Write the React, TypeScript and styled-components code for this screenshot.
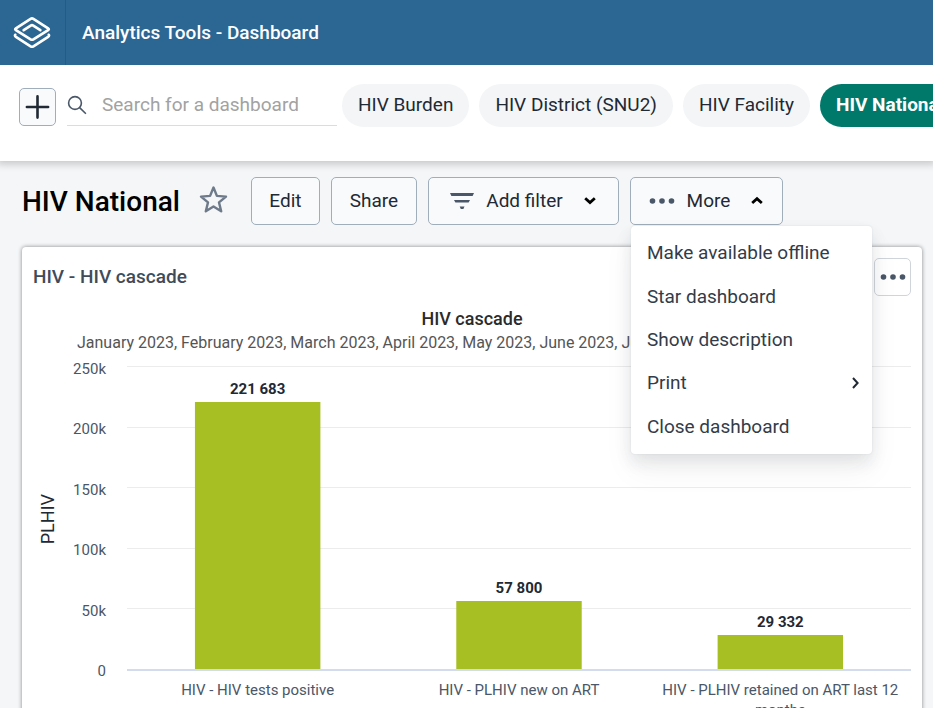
import React from "react";
import styled, { createGlobalStyle } from "styled-components";

const GlobalStyle = createGlobalStyle`
  * { box-sizing: border-box; }
  body { margin: 0; background: #f4f6f8; }
  body, button, input { font-family: Roboto, "Liberation Sans", sans-serif; }
  h1, h2, h3, p, ul { margin: 0; padding: 0; }
`;

const Page = styled.div`
  height: 100vh;
  overflow: hidden;
  background: #f4f6f8;
  color: #212934;
`;

const HeaderBar = styled.header`
  position: relative;
  z-index: 1;
  display: flex;
  height: 65px;
  background: #2c6693;
  color: #fff;
`;

const LogoLink = styled.a`
  display: flex;
  align-items: center;
  justify-content: center;
  width: 66px;
  padding-right: 2px;
  border-right: 1px solid #255a84;
`;

const AppTitle = styled.div`
  padding-left: 16px;
  font-size: 19px;
  font-weight: 500;
  line-height: 65px;
`;

const DashboardsBar = styled.nav`
  position: relative;
  display: flex;
  align-items: flex-start;
  height: 96px;
  padding: 19px 0 0 19px;
  background: #fff;
  box-shadow: 0 0 8px 3px rgba(0, 0, 0, 0.2);
  white-space: nowrap;
`;

const AddButton = styled.button`
  display: flex;
  flex: none;
  align-items: center;
  justify-content: center;
  width: 37px;
  height: 38px;
  margin: 4px 11px 0 0;
  padding: 0;
  border: 1px solid #a0adba;
  border-radius: 5px;
  background: #f9fafb;
`;

const SearchField = styled.label`
  display: flex;
  flex: none;
  align-items: center;
  width: 270px;
  height: 42px;
  margin-right: 5px;
  border-bottom: 1px solid #d5dde5;
`;

const SearchInput = styled.input`
  flex: 1;
  min-width: 0;
  margin-left: 15px;
  padding: 0;
  border: 0;
  outline: 0;
  background: transparent;
  font-size: 19px;
  &::placeholder { color: #a2a2a2; opacity: 1; }
`;

const ChipList = styled.div`
  display: flex;
  flex: 1;
  min-width: 0;
  gap: 10px;
  overflow: hidden;
`;

const Chip = styled.a<{ $selected?: boolean }>`
  flex: none;
  height: 43px;
  padding: 0 16px;
  border-radius: 22px;
  background: ${(p) => (p.$selected ? "#00796b" : "#f3f5f7")};
  color: ${(p) => (p.$selected ? "#fff" : "#212934")};
  font-size: 19px;
  font-weight: ${(p) => (p.$selected ? 700 : 400)};
  line-height: 41px;
  text-decoration: none;
`;

const TitleBar = styled.div`
  display: flex;
  align-items: flex-start;
  padding: 16px 22px 0;
`;

const DashboardTitle = styled.h1`
  color: #000;
  font-size: 28px;
  font-weight: 500;
  line-height: 50px;
`;

const StarButton = styled.button`
  display: flex;
  margin: 8px 23px 0 19px;
  padding: 0;
  border: 0;
  background: transparent;
`;

const ButtonRow = styled.div`
  display: flex;
  gap: 11px;
`;

const Button = styled.button<{ $width: number }>`
  display: flex;
  align-items: center;
  justify-content: center;
  min-width: ${(p) => p.$width}px;
  height: 48px;
  padding: 0 0 2px;
  border: 1px solid #a0adba;
  border-radius: 5px;
  background: #f9fafb;
  color: #212934;
  font-size: 19px;
  svg { margin-top: 2px; }
`;

const ButtonLabel = styled.span`
  margin: 0 20px 0 12px;
`;

const MenuAnchor = styled.div`
  position: relative;
`;

const Menu = styled.ul`
  position: absolute;
  z-index: 2;
  top: 49px;
  left: 1px;
  display: grid;
  grid-auto-rows: 1fr;
  width: 241px;
  height: 228px;
  padding: 5px 0 6px;
  border-radius: 4px;
  background: #fff;
  box-shadow: 0 0 2px rgba(33, 41, 52, 0.1), 0 8px 16px rgba(33, 41, 52, 0.1),
    0 16px 32px rgba(33, 41, 52, 0.05);
  list-style: none;
`;

const MenuItem = styled.li`
  display: flex;
`;

const MenuButton = styled.button`
  display: flex;
  flex: 1;
  align-items: center;
  justify-content: space-between;
  padding: 0 10px 0 16px;
  border: 0;
  background: transparent;
  color: #333c48;
  font-size: 19px;
`;

const Card = styled.section`
  margin: 20px 11px 0 22px;
  padding: 11px 11px 24px;
  border-radius: 4px;
  background: #fff;
  box-shadow: 0 0 4px rgba(0, 0, 0, 0.45);
`;

const CardHeader = styled.div`
  display: flex;
  justify-content: space-between;
  height: 38px;
`;

const CardTitle = styled.h2`
  color: #404b5a;
  font-size: 19px;
  font-weight: 500;
  line-height: 37px;
`;

const CardMenuButton = styled.button`
  display: flex;
  align-items: center;
  justify-content: center;
  width: 37px;
  height: 38px;
  padding: 0;
  border: 1px solid #d0d5db;
  border-radius: 5px;
  background: #fff;
`;

const ChartTitle = styled.h3`
  margin-top: 10px;
  color: #2b2b2b;
  font-size: 18px;
  font-weight: 500;
  line-height: 26px;
  text-align: center;
`;

const ChartSubtitle = styled.p`
  height: 24px;
  margin: 0 42px 0 44px;
  overflow: hidden;
  color: #555;
  font-size: 16px;
  line-height: 22px;
  text-overflow: ellipsis;
  white-space: nowrap;
`;

const ChartBody = styled.div`
  display: grid;
  grid-template-columns: 30px 43px 1fr;
  margin-top: 11px;
`;

const AxisTitle = styled.div`
  align-self: center;
  justify-self: center;
  color: #212934;
  font-size: 18px;
  line-height: 20px;
  writing-mode: vertical-rl;
  transform: rotate(180deg);
`;

const AxisLabels = styled.div`
  display: flex;
  flex-direction: column;
  justify-content: space-between;
  margin: -10px 0;
  padding-top: 2px;
  color: #4a5768;
  font-size: 15px;
  line-height: 20px;
  text-align: right;
`;

const Plot = styled.svg`
  display: block;
  justify-self: end;
  width: calc(100% - 21px);
  height: 304px;
  overflow: visible;
  text {
    fill: #212934;
    font-size: 15px;
    font-weight: 700;
    text-anchor: middle;
  }
`;

const Categories = styled.div`
  display: grid;
  grid-column: 3;
  grid-template-columns: repeat(3, 1fr);
  margin: 9px 0 0 21px;
  color: #4a5768;
  font-size: 15px;
  line-height: 20px;
  text-align: center;
`;

const Category = styled.div`
  padding: 0 10px;
`;

const Logo = () => (
  <svg width="38" height="34" viewBox="0 0 38 34" fill="none" stroke="#fff" strokeWidth="2.7" strokeLinejoin="round" strokeLinecap="round" aria-hidden="true">
    <path d="M17.6 2.9 2.9 12.3q-1.4.9 0 1.8l14.7 9.2q1.4.9 2.8 0l14.7-9.2q1.4-.9 0-1.8L20.4 2.9q-1.4-.9-2.8 0Z" />
    <path d="M2.2 18.8q-.6 1.2.7 2.1l14.7 9.4q1.4.9 2.8 0l14.7-9.4q1.3-.9.7-2.1" />
    <path d="m10.7 14.2 7-4.6q1.3-.8 2.6 0l7 4.6" />
  </svg>
);

const PlusIcon = () => (
  <svg width="25" height="26" viewBox="0 0 25 26" fill="none" stroke="#212934" strokeWidth="2.6" strokeLinecap="round" aria-hidden="true">
    <path d="M12.5 2.4v21.2M1.9 13h21.2" />
  </svg>
);

const SearchIcon = () => (
  <svg width="20" height="20" viewBox="0 0 20 20" fill="none" stroke="#4a5768" strokeWidth="1.6" aria-hidden="true">
    <circle cx="8" cy="8" r="6.4" />
    <path d="m12.6 12.6 6.3 6.2" />
  </svg>
);

const StarIcon = () => (
  <svg width="29" height="29" viewBox="0 0 29 29" fill="none" stroke="#6e7a8a" strokeWidth="2.4" strokeLinejoin="round" aria-hidden="true">
    <path d="m14.5 2.5 3.4 8.4 9.1.7-7 5.8 2.2 8.9-7.7-4.9-7.7 4.9L9 17.4l-7-5.8 9.1-.7Z" />
  </svg>
);

const FilterIcon = () => (
  <svg width="24" height="18" viewBox="0 0 24 18" fill="#4a5768" aria-hidden="true">
    <path d="M0 1h24l-1.4 3H1.4ZM4 8h16l-1.4 2.6H5.4ZM9.7 14.6h4.8L13.4 17h-2.6Z" />
  </svg>
);

const DotsIcon = () => (
  <svg width="26" height="8" viewBox="0 0 26 8" fill="#4a5768" aria-hidden="true">
    <circle cx="3.5" cy="4" r="2.8" />
    <circle cx="13" cy="4" r="2.8" />
    <circle cx="22.5" cy="4" r="2.8" />
  </svg>
);

const chevrons = {
  down: "M2.2 4.2 7 8.6l4.8-4.4",
  up: "M2.2 9 7 4.6 11.8 9",
  right: "m5 2 4.6 5L5 12",
};

const Chevron = ({ direction }: { direction: keyof typeof chevrons }) => (
  <svg width="14" height="14" viewBox="0 0 14 14" fill="none" stroke={direction === "right" ? "#212934" : "#000"} strokeWidth={direction === "right" ? 2 : 2.8} aria-hidden="true">
    <path d={chevrons[direction]} />
  </svg>
);

const dashboards = ["HIV Burden", "HIV District (SNU2)", "HIV Facility", "HIV National"];
const menuItems = ["Make available offline", "Star dashboard", "Show description", "Print", "Close dashboard"];
const ticks = ["250k", "200k", "150k", "100k", "50k", "0"];
const bars = [
  { name: "HIV - HIV tests positive", value: 221683, label: "221 683" },
  { name: "HIV - PLHIV new on ART", value: 57800, label: "57 800" },
  { name: "HIV - PLHIV retained on ART last 12 months", value: 29332, label: "29 332" },
];
const months = ["January", "February", "March", "April", "May", "June", "July", "August", "September"];
const PLOT_HEIGHT = 303;
const AXIS_MAX = 250000;

const Chart = () => (
  <>
    <ChartTitle>HIV cascade</ChartTitle>
    <ChartSubtitle>{months.map((m) => `${m} 2023`).join(", ")}</ChartSubtitle>
    <ChartBody>
      <AxisTitle>PLHIV</AxisTitle>
      <AxisLabels>
        {ticks.map((t) => (
          <span key={t}>{t}</span>
        ))}
      </AxisLabels>
      <Plot role="img" aria-label="HIV cascade column chart">
        {ticks.map((t, i) => {
          const y = Math.round((i * PLOT_HEIGHT) / 5) - 1;
          const base = i === ticks.length - 1;
          return (
            <rect key={t} x="0" y={y} width="100%" height={base ? 2 : 1} fill={base ? "#d3dbec" : "#ececec"} />
          );
        })}
        {bars.map((b, i) => {
          const h = Math.round((b.value / AXIS_MAX) * PLOT_HEIGHT) - 2;
          const y = PLOT_HEIGHT - h - 1;
          const center = ((i + 0.5) * 100) / 3;
          return (
            <React.Fragment key={b.name}>
              <rect x={`${center - 8}%`} y={y} width="16%" height={h} fill="#a8bf24" />
              <text x={`${center}%`} y={y - 8}>{b.label}</text>
            </React.Fragment>
          );
        })}
      </Plot>
      <Categories>
        {bars.map((b) => (
          <Category key={b.name}>{b.name}</Category>
        ))}
      </Categories>
    </ChartBody>
  </>
);

export default function App() {
  return (
    <Page>
      <GlobalStyle />
      <HeaderBar>
        <LogoLink href="#" aria-label="Home">
          <Logo />
        </LogoLink>
        <AppTitle>Analytics Tools - Dashboard</AppTitle>
      </HeaderBar>
      <DashboardsBar>
        <AddButton type="button" aria-label="New dashboard">
          <PlusIcon />
        </AddButton>
        <SearchField>
          <SearchIcon />
          <SearchInput type="text" placeholder="Search for a dashboard" aria-label="Search for a dashboard" />
        </SearchField>
        <ChipList>
          {dashboards.map((d) => (
            <Chip key={d} href="#" $selected={d === "HIV National"}>
              {d}
            </Chip>
          ))}
        </ChipList>
      </DashboardsBar>
      <main>
        <TitleBar>
          <DashboardTitle>HIV National</DashboardTitle>
          <StarButton type="button" aria-label="Star dashboard">
            <StarIcon />
          </StarButton>
          <ButtonRow>
            <Button type="button" $width={69}>Edit</Button>
            <Button type="button" $width={86}>Share</Button>
            <Button type="button" $width={191}>
              <FilterIcon />
              <ButtonLabel>Add filter</ButtonLabel>
              <Chevron direction="down" />
            </Button>
            <MenuAnchor>
              <Button type="button" $width={153} aria-expanded="true">
                <DotsIcon />
                <ButtonLabel>More</ButtonLabel>
                <Chevron direction="up" />
              </Button>
              <Menu>
                {menuItems.map((m) => (
                  <MenuItem key={m}>
                    <MenuButton type="button">
                      {m}
                      {m === "Print" && <Chevron direction="right" />}
                    </MenuButton>
                  </MenuItem>
                ))}
              </Menu>
            </MenuAnchor>
          </ButtonRow>
        </TitleBar>
        <Card>
          <CardHeader>
            <CardTitle>HIV - HIV cascade</CardTitle>
            <CardMenuButton type="button" aria-label="Item options">
              <DotsIcon />
            </CardMenuButton>
          </CardHeader>
          <Chart />
        </Card>
      </main>
    </Page>
  );
}
